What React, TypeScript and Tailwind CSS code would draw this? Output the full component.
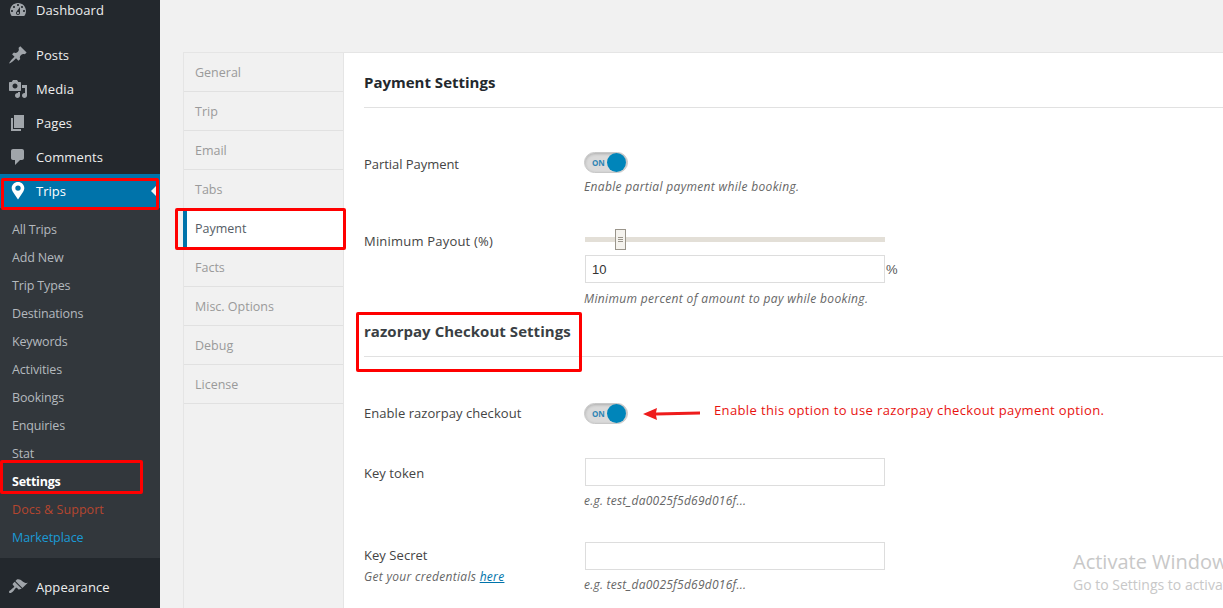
import React from "react";

const icons: Record<string, string> = {
  dash: "M3.76 16h12.48c1.1-1.37 1.76-3.11 1.76-5 0-4.42-3.58-8-8-8s-8 3.58-8 8c0 1.89.66 3.63 1.76 5zM10 4c.55 0 1 .45 1 1s-.45 1-1 1-1-.45-1-1 .45-1 1-1zM6 6c.55 0 1 .45 1 1s-.45 1-1 1-1-.45-1-1 .45-1 1-1zm8 0c.55 0 1 .45 1 1s-.45 1-1 1-1-.45-1-1 .45-1 1-1zm-5.37 5.55L12 7v6c0 1.1-.9 2-2 2s-2-.9-2-2c0-.57.24-1.08.63-1.45zM4 10c.55 0 1 .45 1 1s-.45 1-1 1-1-.45-1-1 .45-1 1-1zm12 0c.55 0 1 .45 1 1s-.45 1-1 1-1-.45-1-1 .45-1 1-1zm-5 3c0-.55-.45-1-1-1s-1 .45-1 1 .45 1 1 1 1-.45 1-1z",
  post: "M10.44 3.02l1.82-1.82 6.36 6.35-1.83 1.82c-1.05-.68-2.48-.57-3.41.36l-.75.75c-.92.93-1.04 2.35-.35 3.41l-1.83 1.82-2.41-2.41-2.8 2.79c-.42.42-3.38 2.71-3.8 2.29s1.86-3.39 2.28-3.81l2.79-2.79L4.1 9.36l1.83-1.82c1.05.69 2.48.57 3.4-.36l.75-.75c.93-.92 1.05-2.35.36-3.41z",
  media: "M13 11V4c0-.55-.45-1-1-1h-1.67L9 1H5L3.67 3H2c-.55 0-1 .45-1 1v7c0 .55.45 1 1 1h10c.55 0 1-.45 1-1zM7 4.5c1.38 0 2.5 1.12 2.5 2.5S8.38 9.5 7 9.5 4.5 8.38 4.5 7 5.62 4.5 7 4.5zM14 6h5v10.5c0 1.38-1.12 2.5-2.5 2.5S14 17.88 14 16.5s1.12-2.5 2.5-2.5c.17 0 .34.02.5.05V9h-3V6zm-4 8.05V13h2v3.5c0 1.38-1.12 2.5-2.5 2.5S7 17.88 7 16.5 8.12 14 9.5 14c.17 0 .34.02.5.05z",
  page: "M6 15V2h10v13H6zm-1 1h8v2H3V5h2v11z",
  comment: "M5 2h9c1.1 0 2 .9 2 2v7c0 1.1-.9 2-2 2h-2l-5 5v-5H5c-1.1 0-2-.9-2-2V4c0-1.1.9-2 2-2z",
  trip: "M10 1c-3.5 0-6.3 2.7-6.3 6.1 0 1.4.5 2.7 1.3 3.8L10 18.5l5-7.6c.8-1.1 1.3-2.4 1.3-3.8C16.300 3.700 13.500 1 10 1zm0 3.400a2.700 2.700 0 1 1 0 5.400 2.700 2.700 0 0 1 0-5.400z",
  appear: "M14.48 11.06L7.41 3.99l1.5-1.5c.5-.56 2.3-.47 3.51.32 1.21.8 1.43 1.28 2.91 2.1 1.18.64 2.45 1.26 4.45.85zm-.71.71L6.7 4.7 4.93 6.47c-.39.39-.39 1.02 0 1.41l1.06 1.06c.39.39.39 1.03 0 1.42-.6.6-1.43 1.11-2.21 1.69-.35.26-.7.53-1.01.84C1.43 13.23.4 14.89 1.3 15.79c.9.89 2.55-.13 3.9-1.48.31-.31.58-.66.85-1.02.57-.78 1.08-1.61 1.69-2.21.39-.39 1.02-.39 1.41 0l1.06 1.06c.39.39 1.02.39 1.41 0z",
};

function Icon({ name, white }: { name: string; white?: boolean }) {
  return (
    <svg viewBox="0 0 20 20" className={`w-5 h-5 shrink-0 ${white ? "fill-white" : "fill-[#a0a5aa]"}`}>
      <path d={icons[name]} fillRule="evenodd" />
    </svg>
  );
}

function MenuItem({ name, label }: { name: string; label: string }) {
  return (
    <div className="h-[34px] flex items-center pl-2 gap-2 text-[#eeeeee]">
      <Icon name={name} />
      <span className="text-[13px] pt-[2px] tracking-[0.1px]">{label}</span>
    </div>
  );
}

function Toggle() {
  return (
    <div className="w-11 h-[21px] rounded-full bg-[#dadada] border border-[#c8c8c8] shadow-[inset_0_1px_3px_rgba(0,0,0,0.2)] flex items-center justify-between pl-[7px] pr-px">
      <span className="text-[8px] font-bold text-[#2f86b5] leading-none tracking-normal">ON</span>
      <span className="w-[19px] h-[19px] rounded-full bg-[#0085ba]" />
    </div>
  );
}

const tabs = ["General", "Trip", "Email", "Tabs", "Payment", "Facts", "Misc. Options", "Debug", "License"];
const subs = ["All Trips", "Add New", "Trip Types", "Destinations", "Keywords", "Activities", "Bookings", "Enquiries", "Stat"];

export default function App() {
  return (
    <div className="relative flex h-[608px] w-[1223px] overflow-hidden bg-[#f1f1f1] font-['Open_Sans','Noto_Sans',sans-serif] text-[13px]">
      {/* sidebar */}
      <aside className="w-40 shrink-0 bg-[#23282d] -mt-[7px]">
        <MenuItem name="dash" label="Dashboard" />
        <div className="h-[11px]" />
        <MenuItem name="post" label="Posts" />
        <MenuItem name="media" label="Media" />
        <MenuItem name="page" label="Pages" />
        <MenuItem name="comment" label="Comments" />
        <div className="relative h-[34px] flex items-center pl-2 gap-2 bg-[#0073aa] text-white">
          <Icon name="trip" white />
          <span className="pt-[2px]">Trips</span>
          <span className="absolute right-[3px] top-[11px] border-y-[6px] border-y-transparent border-r-[6px] border-r-[#f1f1f1]" />
        </div>
        <div className="bg-[#32373c] pt-[7px] pb-[7px] text-[#b4b9be] text-[12.5px] tracking-[-0.15px]">
          {subs.map((s) => (
            <div key={s} className="h-7 flex items-center pl-3 pt-[2px]">{s}</div>
          ))}
          <div className="h-7 flex items-center pl-3 pt-[2px] font-bold text-white tracking-[-0.25px]">Settings</div>
          <div className="h-7 flex items-center pl-3 pt-[2px] text-[#b5462f] tracking-[0.06px]">Docs &amp; Support</div>
          <div className="h-7 flex items-center pl-3 pt-[2px] text-[#1a9ad6] tracking-[-0.05px]">Marketplace</div>
        </div>
        <div className="h-[12px]" />
        <MenuItem name="appear" label="Appearance" />
      </aside>

      {/* main */}
      <main className="flex-1 pl-[23px] pt-[52px]">
        <div className="flex h-full border-t border-[#e5e5e5]">
          <nav className="w-[161px] shrink-0 border-x border-[#e5e5e5] text-[12.5px]">
            {tabs.map((t) =>
              t === "Payment" ? (
                <div key={t} className="h-[39px] flex items-center -mr-px bg-white border-l-[4px] border-l-[#0073aa] -ml-px pl-[8px] pt-[2px] text-[#555d66]">
                  {t}
                </div>
              ) : (
                <div key={t} className="h-[39px] flex items-center pl-[11px] pt-[2px] border-b border-[#e1e1e1] text-[#9a9a9a]">
                  {t}
                </div>
              )
            )}
          </nav>
          <section className="flex-1 bg-white pl-5 text-[#444] tracking-[0.05px]">
            <h2 className="h-[55px] border-b border-[#e1e1e1] text-[15px] font-bold text-[#23282d] pt-[17px] leading-6 tracking-normal">Payment Settings</h2>
            <div className="flex mt-[44px]">
              <div className="w-[220px] pt-[3px] tracking-[-0.05px]">Partial Payment</div>
              <div>
                <Toggle />
                <p className="mt-[6px] text-xs italic text-[#666] tracking-[0.33px]">Enable partial payment while booking.</p>
              </div>
            </div>
            <div className="flex mt-[34px]">
              <div className="w-[220px] pt-[3px] tracking-[0.2px]">Minimum Payout (%)</div>
              <div className="w-[300px] ml-px">
                <div className="relative h-[5px] mt-[8px] bg-[#e3dfd7]">
                  <span className="absolute left-[30px] -top-2 w-[11px] h-[21px] bg-[#f5f3ee] border border-[#9a958b] flex flex-col items-center justify-center gap-px">
                    <span className="w-[5px] h-px bg-[#9a958b]" />
                    <span className="w-[5px] h-px bg-[#9a958b]" />
                    <span className="w-[5px] h-px bg-[#9a958b]" />
                  </span>
                </div>
                <div className="relative mt-[13px] h-7 w-[300px] border border-[#dddddd] flex items-center pl-[6px] pt-[2px] text-[#333] font-['Liberation_Sans',sans-serif] text-[13px] tracking-normal">
                  10
                  <span className="absolute left-[300px] text-[#555]">%</span>
                </div>
                <p className="mt-[8px] text-xs italic text-[#666] whitespace-nowrap tracking-[0.35px] -ml-px">Minimum percent of amount to pay while booking.</p>
              </div>
            </div>
            <h2 className="h-[51px] border-b border-[#e1e1e1] text-[15px] font-bold text-[#3a3f44] pt-[9px] -mt-[1px] leading-8 tracking-[0.04px]">razorpay Checkout Settings</h2>
            <div className="flex mt-[46px] items-center">
              <div className="w-[220px]">Enable razorpay checkout</div>
              <Toggle />
              <svg viewBox="0 0 58 14" className="w-[58px] h-[14px] ml-[15px] fill-[#ee1c1c]">
                <path d="M0 7 L14 1 L13 5.6 L57 4.6 L57 7.4 L13 8.6 L14 13 Z" />
              </svg>
              <span className="ml-[13px] text-[#e8130f] -mt-[6px] whitespace-nowrap tracking-[0.37px]">Enable this option to use razorpay checkout payment option.</span>
            </div>
            <div className="flex mt-[34px]">
              <div className="w-[221px] pt-[6px]">Key token</div>
              <div>
                <div className="h-7 w-[300px] border border-[#dddddd]" />
                <p className="mt-[7px] text-xs italic text-[#666] -ml-px tracking-[0.24px]">e.g. test_da0025f5d69d016f...</p>
              </div>
            </div>
            <div className="flex mt-[33px]">
              <div className="w-[221px] pt-[4px]">
                <div>Key Secret</div>
                <div className="mt-[3px] text-xs italic text-[#666] tracking-[0.3px]">Get your credentials <span className="underline text-[#0073aa]">here</span></div>
              </div>
              <div>
                <div className="h-7 w-[300px] border border-[#dddddd]" />
                <p className="mt-[7px] text-xs italic text-[#666] -ml-px tracking-[0.24px]">e.g. test_da0025f5d69d016f...</p>
              </div>
            </div>
          </section>
        </div>
      </main>

      {/* annotations */}
      <div className="absolute left-px top-[178px] w-[158px] h-[32px] border-[3px] border-[#ff0000] rounded-[2px]" />
      <div className="absolute left-0 top-[460px] w-[143px] h-[34px] border-[3px] border-[#ff0000] rounded-[2px]" />
      <div className="absolute left-[175px] top-[208px] w-[171px] h-[42px] border-[3px] border-[#ff0000] rounded-[2px]" />
      <div className="absolute left-[356px] top-[312px] w-[226px] h-[60px] border-[3px] border-[#ff0000] rounded-[2px]" />
      {/* Windows watermark */}
      <div className="absolute left-[1073px] top-[549px] whitespace-nowrap text-[#c8c8c8] font-['Open_Sans',sans-serif]">
        <div className="text-[20px] leading-[26px]">Activate Windows</div>
        <div className="text-sm leading-5">Go to Settings to activate Windows.</div>
      </div>
    </div>
  );
}
